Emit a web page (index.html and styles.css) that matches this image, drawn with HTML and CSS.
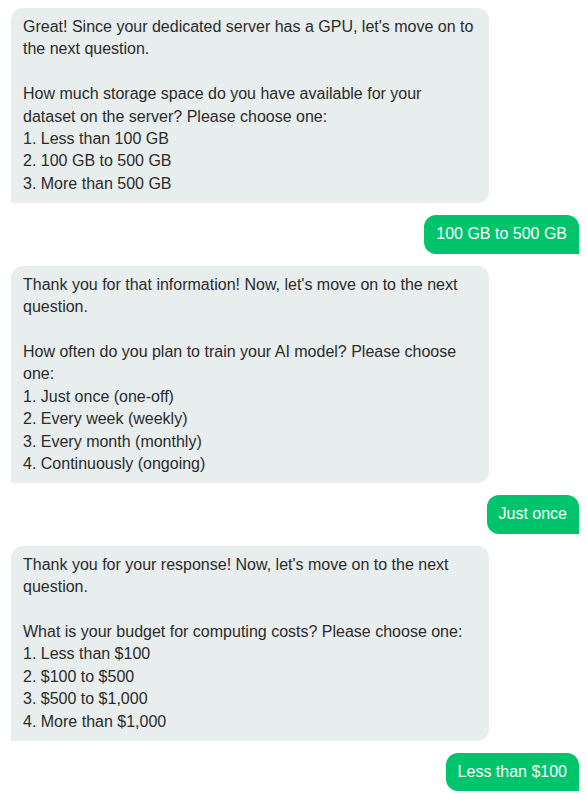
FILE: index.html
```html
<!DOCTYPE html>
<html>
<head>
<meta charset="utf-8">
<link rel="stylesheet" href="styles.css">
</head>
<body>
<div class="chat">
  <div class="msg bot">Great! Since your dedicated server has a GPU, let's move on to<br>the next question.<br><br>How much storage space do you have available for your<br>dataset on the server? Please choose one:<br>1. Less than 100 GB<br>2. 100 GB to 500 GB<br>3. More than 500 GB</div>
  <div class="msg user">100 GB to 500 GB</div>
  <div class="msg bot">Thank you for that information! Now, let's move on to the next<br>question.<br><br>How often do you plan to train your AI model? Please choose<br>one:<br>1. Just once (one-off)<br>2. Every week (weekly)<br>3. Every month (monthly)<br>4. Continuously (ongoing)</div>
  <div class="msg user">Just once</div>
  <div class="msg bot">Thank you for your response! Now, let's move on to the next<br>question.<br><br>What is your budget for computing costs? Please choose one:<br>1. Less than $100<br>2. $100 to $500<br>3. $500 to $1,000<br>4. More than $1,000</div>
  <div class="msg user">Less than $100</div>
</div>
</body>
</html>
```
FILE: styles.css
```css
html, body {
  margin: 0;
  padding: 0;
  background: #ffffff;
}
body {
  font-family: "Liberation Sans", Arial, Helvetica, sans-serif;
  font-size: 16px;
  line-height: 22.4px;
  color: #2b2b2b;
}
.chat {
  display: flex;
  flex-direction: column;
  gap: 12px;
  padding: 8px 8px 8px 11px;
}
.msg {
  padding: 8px 12px;
  border-radius: 12px;
  white-space: nowrap;
}
.bot {
  align-self: flex-start;
  width: 454px;
  background: #e8eded;
  border-bottom-left-radius: 0;
}
.user {
  align-self: flex-end;
  background: #00c46b;
  color: #ffffff;
  border-bottom-right-radius: 0;
}
```
